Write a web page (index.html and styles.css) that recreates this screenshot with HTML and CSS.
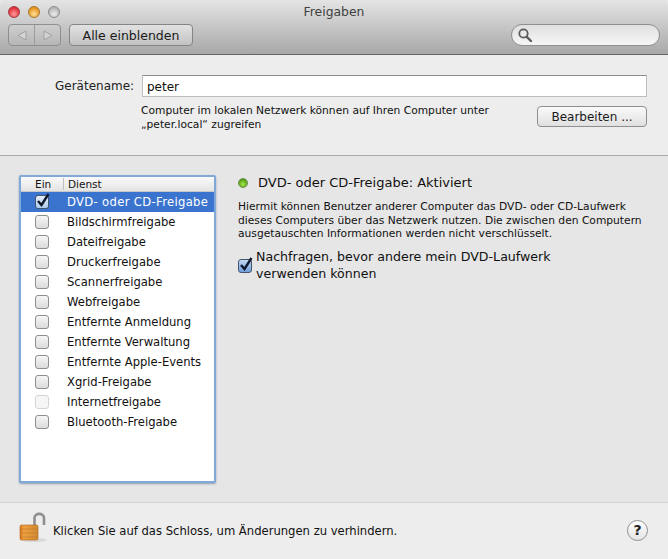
FILE: index.html
```html
<!DOCTYPE html>
<html lang="de">
<head>
    <meta charset="UTF-8">
    <meta name="viewport" content="width=device-width, initial-scale=1.0">
    <title>Freigaben</title>
    <link rel="stylesheet" href="styles.css">
</head>
<body>
    <div class="window">
        <header class="toolbar">
            <div class="titlerow">
                <div class="lights">
                    <span class="light red"></span>
                    <span class="light orange"></span>
                    <span class="light grey"></span>
                </div>
                <div class="title">Freigaben</div>
            </div>
            <div class="toolrow">
                <div class="navgroup">
                    <span class="navpart">
                        <svg width="10" height="11" viewBox="0 0 10 11"><path d="M9 1 L1 5.5 L9 10 Z" fill="#d4d4d4" stroke="#a0a0a0"/></svg>
                    </span>
                    <span class="navpart">
                        <svg width="10" height="11" viewBox="0 0 10 11"><path d="M1 1 L9 5.5 L1 10 Z" fill="#d4d4d4" stroke="#a0a0a0"/></svg>
                    </span>
                </div>
                <button class="btn showall">Alle einblenden</button>
                <div class="search">
                    <svg width="16" height="16" viewBox="0 0 16 16"><circle cx="6.5" cy="6.5" r="4.2" fill="none" stroke="#5c5c5c" stroke-width="1.8"/><path d="M9.8 9.8 L14 14" stroke="#5c5c5c" stroke-width="2.4" stroke-linecap="round"/></svg>
                </div>
            </div>
        </header>

        <section class="device">
            <div class="namerow">
                <label class="namelabel" for="devicename">Gerätename:</label>
                <input class="nameinput" id="devicename" type="text" value="peter">
            </div>
            <div class="hostrow">
                <p class="hosttext">Computer im lokalen Netzwerk können auf Ihren Computer unter<br>„peter.local“ zugreifen</p>
                <button class="btn edit">Bearbeiten ...</button>
            </div>
        </section>

        <main class="content">
            <div class="servicelist">
                <div class="listhead">
                    <span class="headon">Ein</span>
                    <span class="headname">Dienst</span>
                </div>
                <div class="row selected"><span class="cellcheck"><span class="check on"><svg width="16" height="16" viewBox="0 0 16 16"><path d="M3 8 L6.5 12 L13.5 1" fill="none" stroke="#10182c" stroke-width="2.4"/></svg></span></span><span class="rowname">DVD- oder CD-Freigabe</span></div>
                <div class="row"><span class="cellcheck"><span class="check"></span></span><span class="rowname">Bildschirmfreigabe</span></div>
                <div class="row"><span class="cellcheck"><span class="check"></span></span><span class="rowname">Dateifreigabe</span></div>
                <div class="row"><span class="cellcheck"><span class="check"></span></span><span class="rowname">Druckerfreigabe</span></div>
                <div class="row"><span class="cellcheck"><span class="check"></span></span><span class="rowname">Scannerfreigabe</span></div>
                <div class="row"><span class="cellcheck"><span class="check"></span></span><span class="rowname">Webfreigabe</span></div>
                <div class="row"><span class="cellcheck"><span class="check"></span></span><span class="rowname">Entfernte Anmeldung</span></div>
                <div class="row"><span class="cellcheck"><span class="check"></span></span><span class="rowname">Entfernte Verwaltung</span></div>
                <div class="row"><span class="cellcheck"><span class="check"></span></span><span class="rowname">Entfernte Apple-Events</span></div>
                <div class="row"><span class="cellcheck"><span class="check"></span></span><span class="rowname">Xgrid-Freigabe</span></div>
                <div class="row"><span class="cellcheck"><span class="check off"></span></span><span class="rowname">Internetfreigabe</span></div>
                <div class="row"><span class="cellcheck"><span class="check"></span></span><span class="rowname">Bluetooth-Freigabe</span></div>
            </div>

            <div class="detail">
                <div class="status">
                    <span class="statusdot"></span>
                    <span class="statustext">DVD- oder CD-Freigabe: Aktiviert</span>
                </div>
                <p class="desc">Hiermit können Benutzer anderer Computer das DVD- oder CD-Laufwerk<br>dieses Computers über das Netzwerk nutzen. Die zwischen den Computern<br>ausgetauschten Informationen werden nicht verschlüsselt.</p>
                <div class="ask">
                    <span class="check on blue"><svg width="16" height="16" viewBox="0 0 16 16"><path d="M3 8 L6.5 12 L13.5 1" fill="none" stroke="#10182c" stroke-width="2.4"/></svg></span>
                    <span class="asktext">Nachfragen, bevor andere mein DVD-Laufwerk<br>verwenden können</span>
                </div>
            </div>
        </main>

        <footer class="bottom">
            <svg class="lock" width="28" height="32" viewBox="0 0 28 32">
                <defs>
                    <linearGradient id="brass" x1="0" y1="0" x2="1" y2="0">
                        <stop offset="0" stop-color="#d9741a"/>
                        <stop offset="0.2" stop-color="#f0a040"/>
                        <stop offset="1" stop-color="#d08a30"/>
                    </linearGradient>
                </defs>
                <path d="M15.5 14 V6 C15.5 0.5 25 0.5 25 6 V13" fill="none" stroke="#8e8e8e" stroke-width="2.6"/>
                <ellipse cx="15" cy="28" rx="13" ry="2" fill="#d8d8d8"/>
                <rect x="1" y="13" width="18" height="15" rx="1.5" fill="url(#brass)" stroke="#b0661c" stroke-width="0.6"/>
                <path d="M1 17 H19 M1 21 H19 M1 25 H19" stroke="#b9782e" stroke-width="0.6"/>
            </svg>
            <span class="locktext">Klicken Sie auf das Schloss, um Änderungen zu verhindern.</span>
            <span class="help">?</span>
        </footer>
    </div>
</body>
</html>
```

FILE: styles.css
```css
* {
    box-sizing: border-box;
}

html, body {
    margin: 0;
    padding: 0;
}

body {
    font-family: "DejaVu Sans", sans-serif;
    font-size: 10.7px;
    color: #111;
    background-color: #e8e8e8;
}

.window {
    width: 668px;
    height: 559px;
    display: flex;
    flex-direction: column;
    overflow: hidden;
}

/* toolbar */
.toolbar {
    height: 55px;
    padding: 0 8px 0 8px;
    background: linear-gradient(#e4e4e4, #a8a8a8);
    border-bottom: 1px solid #636363;
    border-radius: 5px 5px 0 0;
}

.titlerow {
    height: 23px;
    display: flex;
    align-items: center;
    position: relative;
}

.lights {
    display: flex;
    gap: 8px;
}

.light {
    width: 12px;
    height: 12px;
    border-radius: 50%;
    border: 1px solid #8c8c8c;
}

.light.red {
    background: radial-gradient(circle at 50% 70%, #ff9a9a, #e0303c 70%);
    border-color: #a33a40;
}

.light.orange {
    background: radial-gradient(circle at 50% 70%, #ffdf96, #e4951f 70%);
    border-color: #a8752a;
}

.light.grey {
    background: radial-gradient(circle at 50% 70%, #eeeeee, #b5b5b5 70%);
}

.title {
    flex: 1;
    text-align: center;
    font-size: 12.4px;
    color: #404040;
    margin-left: -52px;
}

.toolrow {
    display: flex;
    align-items: center;
    height: 22px;
    margin-top: 1px;
}

.navgroup {
    width: 53px;
    height: 22px;
    display: flex;
    border: 1px solid #8f8f8f;
    border-radius: 4px;
    background: linear-gradient(rgba(255, 255, 255, 0.1), rgba(255, 255, 255, 0.05));
}

.navpart {
    flex: 1;
    display: flex;
    align-items: center;
    justify-content: center;
}

.navpart + .navpart {
    border-left: 1px solid #9c9c9c;
}

.btn {
    font-family: inherit;
    font-size: 12px;
    color: #1a1a1a;
    padding: 0;
    border: 1px solid #858585;
    border-radius: 4px;
}

.showall {
    width: 124px;
    height: 22px;
    margin-left: 8px;
    padding-top: 1px;
    font-size: 12.5px;
    background: linear-gradient(#e2e2e2, #c2c2c2);
}

.search {
    width: 149px;
    height: 22px;
    margin-left: auto;
    padding: 2px 0 0 5px;
    border: 1px solid #8f8f8f;
    border-radius: 11px;
    background: linear-gradient(#e0e0e0, #f6f6f6);
}

/* device name */
.device {
    height: 101px;
    padding: 20px 21px 0 55px;
    background-color: #ededed;
    border-bottom: 1px solid #ababab;
}

.namerow {
    display: flex;
    align-items: center;
}

.namelabel {
    font-size: 12px;
    width: 87px;
    color: #222;
}

.nameinput {
    flex: 1;
    height: 22px;
    padding: 1px 4px 0;
    font-family: inherit;
    font-size: 12px;
    color: #111;
    background-color: #fff;
    border: 1px solid #bdbdbd;
    border-top-color: #8c8c8c;
    border-radius: 0;
    outline: none;
}

.hostrow {
    display: flex;
    justify-content: space-between;
    margin-top: 6px;
    padding-left: 86px;
}

.hosttext {
    margin: 1px 0 0;
    line-height: 14px;
}

.edit {
    width: 110px;
    height: 21px;
    margin-top: 3px;
    background: linear-gradient(#fafafa, #e0e0e0);
    border-color: #8f8f8f;
}

/* services */
.content {
    flex: 1;
    display: flex;
    padding: 19px 0 0 19px;
    background-color: #e6e6e6;
}

.servicelist {
    width: 197px;
    height: 308px;
    background-color: #fff;
    border: 2px solid #81a9d8;
    border-radius: 2px;
    box-shadow: 0 1px 2px rgba(60, 90, 130, 0.5);
}

.listhead {
    height: 15px;
    display: flex;
    align-items: center;
    font-size: 10.5px;
    background: linear-gradient(#fafafa, #e4e4e4);
    border-bottom: 1px solid #c8c8c8;
}

.headon {
    width: 42px;
    padding-left: 14px;
}

.headname {
    padding-left: 4px;
    border-left: 1px solid #c0c0c0;
}

.row {
    height: 20px;
    display: flex;
    align-items: center;
    font-size: 11.6px;
}

.row.selected {
    color: #fff;
    background-color: #3b74ce;
    letter-spacing: 0.33px;
}

.cellcheck {
    width: 46px;
    padding-left: 14px;
    display: flex;
}

.check {
    width: 14px;
    height: 14px;
    display: block;
    position: relative;
    flex: none;
    border: 1px solid #8e8e8e;
    border-radius: 3px;
    background: linear-gradient(#f6f6f6, #dcdcdc);
}

.check svg {
    position: absolute;
    left: -1px;
    top: -3px;
}

.check.on {
    background: linear-gradient(#e8eef8, #aecbee);
    border-color: #44556f;
}

.check.blue {
    background: linear-gradient(#c4d8f2, #6f9fdc);
}

.check.off {
    background: #f6f6f6;
    border-color: #d4d4d4;
}

/* detail */
.detail {
    flex: 1;
    padding: 0 0 0 22px;
}

.status {
    display: flex;
    align-items: center;
    height: 15px;
}

.statusdot {
    width: 10px;
    height: 10px;
    border-radius: 50%;
    background: radial-gradient(circle at 50% 65%, #a6e84a, #4f9a12 75%);
    border: 1px solid #6c8f4a;
}

.statustext {
    margin-left: 10px;
    font-size: 13px;
}

.desc {
    margin: 10px 0 0;
    line-height: 13.5px;
}

.ask {
    display: flex;
    align-items: flex-start;
    margin: 7px 0 0;
}

.ask .check {
    margin-top: 11px;
}

.asktext {
    margin-left: 4px;
    font-size: 12.6px;
    line-height: 17px;
}

/* bottom */
.bottom {
    height: 57px;
    display: flex;
    align-items: center;
    padding: 0 20px 0 19px;
    background-color: #ededed;
    border-top: 1px solid #d4d4d4;
}

.lock {
    margin-top: -6px;
}

.locktext {
    margin-left: 6px;
    font-size: 11.6px;
}

.help {
    width: 21px;
    height: 21px;
    margin-left: auto;
    margin-top: -2px;
    display: flex;
    align-items: center;
    justify-content: center;
    font-weight: bold;
    font-size: 14px;
    color: #222;
    background: linear-gradient(#ffffff, #e4e4e4);
    border: 1px solid #8e8e8e;
    border-radius: 50%;
}
```
